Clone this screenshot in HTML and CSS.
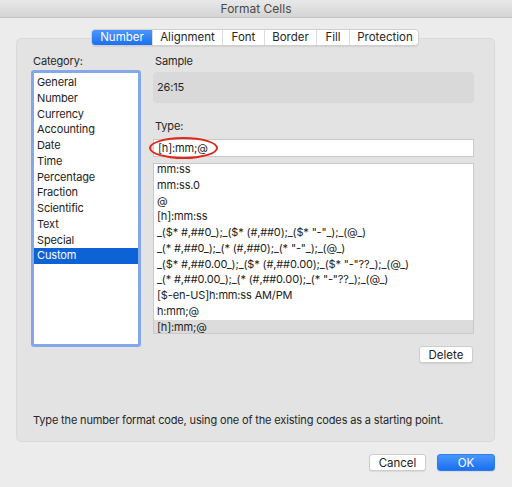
FILE: index.html
```html
<!DOCTYPE html>
<html lang="en">
<head>
  <meta charset="UTF-8">
  <title>Format Cells</title>
  <link rel="stylesheet" href="styles.css">
</head>
<body>
  <div class="window">
    <div class="titlebar">Format Cells</div>

    <div class="tabs">
      <span class="tab active" style="width:60px">Number</span>
      <span class="tab" style="width:70px">Alignment</span>
      <span class="tab" style="width:42px">Font</span>
      <span class="tab" style="width:52px">Border</span>
      <span class="tab" style="width:33px">Fill</span>
      <span class="tab" style="width:71px">Protection</span>
    </div>

    <div class="panel">
      <div class="cols">
        <div class="col-left">
          <div class="label">Category:</div>
          <ul class="category-list">
            <li>General</li>
            <li>Number</li>
            <li>Currency</li>
            <li>Accounting</li>
            <li>Date</li>
            <li>Time</li>
            <li>Percentage</li>
            <li>Fraction</li>
            <li>Scientific</li>
            <li>Text</li>
            <li>Special</li>
            <li class="selected">Custom</li>
          </ul>
        </div>

        <div class="col-right">
          <div class="label">Sample</div>
          <div class="sample">26:15</div>

          <div class="label type-label">Type:</div>
          <div class="type-wrap">
            <input class="type-input" type="text" value="[h]:mm;@">
            <div class="circle"></div>
          </div>

          <ul class="format-list">
            <li>mm:ss</li>
            <li>mm:ss.0</li>
            <li>@</li>
            <li>[h]:mm:ss</li>
            <li>_($* #,##0_);_($* (#,##0);_($* "-"_);_(@_)</li>
            <li>_(* #,##0_);_(* (#,##0);_(* "-"_);_(@_)</li>
            <li>_($* #,##0.00_);_($* (#,##0.00);_($* "-"??_);_(@_)</li>
            <li>_(* #,##0.00_);_(* (#,##0.00);_(* "-"??_);_(@_)</li>
            <li>[$-en-US]h:mm:ss AM/PM</li>
            <li>h:mm;@</li>
            <li class="selected">[h]:mm;@</li>
          </ul>

          <div class="delete-row">
            <button class="btn">Delete</button>
          </div>
        </div>
      </div>

      <p class="hint">Type the number format code, using one of the existing codes as a starting point.</p>
    </div>

    <div class="footer">
      <button class="btn cancel">Cancel</button>
      <button class="btn primary">OK</button>
    </div>
  </div>
</body>
</html>
```

FILE: styles.css
```css
* {
  box-sizing: border-box;
}

body {
  margin: 0;
  background: #ececec;
  font-family: Inter, "Liberation Sans", sans-serif;
  font-size: 11px;
  letter-spacing: -0.15px;
  color: #222;
}

.window {
  width: 512px;
  height: 487px;
  background: #ececec;
}

.titlebar {
  height: 18px;
  line-height: 18px;
  text-align: center;
  font-size: 12px;
  letter-spacing: 0;
  color: #4a4a4a;
  background: linear-gradient(to bottom, #e9e9e9, #d4d4d4);
  border-bottom: 1px solid #c2c2c2;
}

.tabs {
  position: relative;
  z-index: 1;
  display: flex;
  width: 328px;
  height: 17px;
  margin: 11px 0 0 91px;
  background: #fff;
  border: 1px solid #cfcfcf;
  border-radius: 4px;
  box-shadow: 0 1px 1px rgba(0,0,0,0.08);
  overflow: hidden;
}

.tab {
  flex: none;
  text-align: center;
  line-height: 15px;
  font-size: 11.5px;
  letter-spacing: 0;
  color: #262626;
  border-left: 1px solid #dcdcdc;
}

.tab:first-child {
  border-left: none;
}

.tab.active {
  color: #fff;
  background: linear-gradient(to bottom, #4a97fb, #1b6ff2);
}

.panel {
  width: 479px;
  height: 404px;
  margin: -8px 0 0 16px;
  padding: 15px 20px 0 14px;
  background: #e3e3e3;
  border: 1px solid #dadada;
  border-radius: 5px;
}

.cols {
  display: flex;
  gap: 12px;
}

.col-left {
  width: 110px;
}

.col-right {
  flex: 1;
}

.label {
  height: 14px;
  line-height: 14px;
  padding-left: 2px;
  color: #262626;
}

ul {
  list-style: none;
  margin: 0;
  padding: 0;
}

li {
  height: 15.75px;
  line-height: 15.75px;
  white-space: nowrap;
}

.category-list {
  margin-top: 2px;
  height: 277px;
  padding: 2px 0;
  background: #fff;
  border: 3px solid #83a8ea;
  border-radius: 3px;
}

.category-list li {
  padding-left: 3px;
}

.category-list li.selected {
  background: #0d62d6;
  color: #fff;
}

.sample {
  margin-top: 4px;
  height: 31px;
  line-height: 31px;
  padding-left: 4px;
  background: #d9d9d9;
  border-radius: 4px;
  color: #262626;
}

.type-label {
  margin-top: 16px;
}

.type-wrap {
  position: relative;
  margin-top: 6px;
}

.type-input {
  display: block;
  width: 100%;
  height: 18px;
  margin: 0;
  padding: 0 4px;
  font-family: inherit;
  font-size: 11px;
  letter-spacing: -0.15px;
  color: #222;
  background: #fff;
  border: 1px solid #c9c9c9;
  outline: none;
}

.circle {
  position: absolute;
  left: -4px;
  top: -2px;
  width: 69px;
  height: 22px;
  border: 2px solid #e3261c;
  border-radius: 50%;
}

.format-list {
  margin-top: 6px;
  height: 171px;
  padding: 0;
  background: #fff;
  border: 1px solid #c9c9c9;
  overflow: hidden;
}

.format-list li {
  padding-left: 3px;
}

.format-list li:first-child {
  margin-top: -2px;
}

.format-list li.selected {
  background: #dcdcdc;
}

.delete-row {
  display: flex;
  justify-content: flex-end;
  margin-top: 12px;
  padding-right: 1px;
}

.btn {
  height: 17px;
  padding: 0;
  font-family: inherit;
  font-size: 11.5px;
  letter-spacing: 0;
  color: #222;
  background: #fff;
  border: 1px solid #cdcdcd;
  border-radius: 3px;
  box-shadow: 0 1px 1px rgba(0,0,0,0.08);
}

.delete-row .btn {
  width: 54px;
}

.hint {
  margin: 50px 0 0 2px;
  color: #262626;
}

.footer {
  display: flex;
  justify-content: flex-end;
  gap: 11px;
  margin-top: 12px;
  padding-right: 17px;
}

.cancel {
  width: 57px;
}

.primary {
  width: 58px;
  color: #fff;
  border-color: #2a7cf3;
  background: linear-gradient(to bottom, #4a97fb, #1b6ff2);
}
```
